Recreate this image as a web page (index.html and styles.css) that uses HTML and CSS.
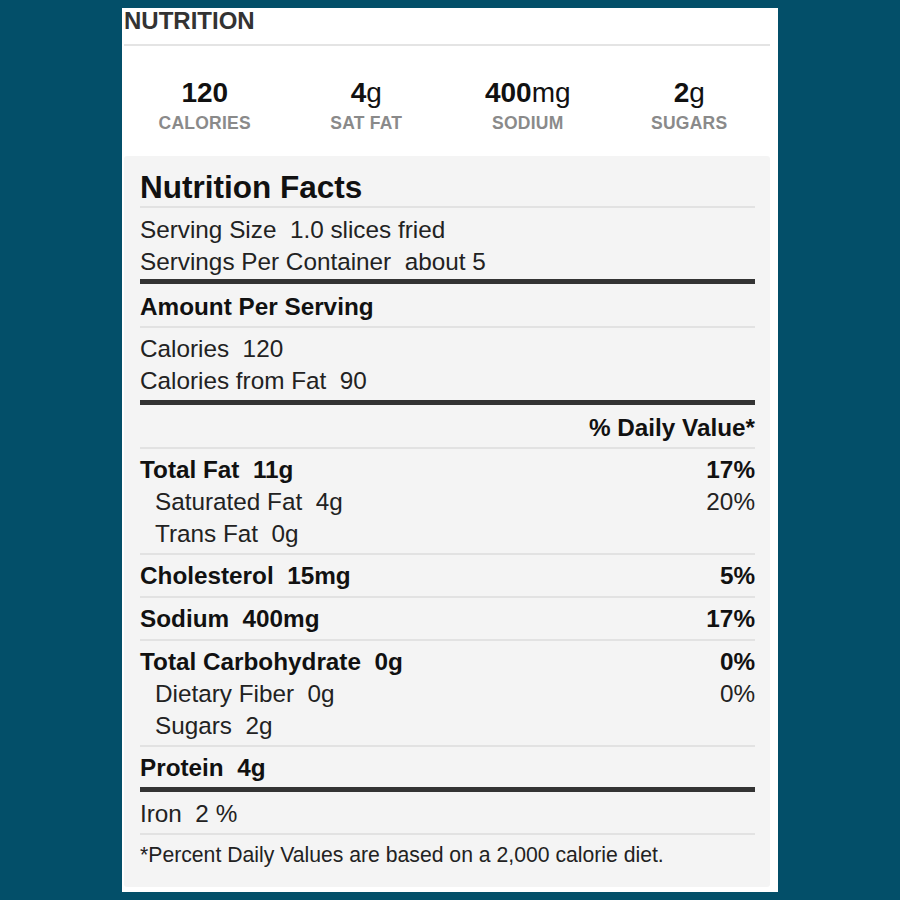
FILE: index.html
```html
<!DOCTYPE html>
<html>
<head>
<meta charset="utf-8">
<link rel="stylesheet" href="styles.css">
</head>
<body>
<div class="card">
  <h2 class="title">NUTRITION</h2>
  <div class="stats">
    <div class="stat"><div class="num"><b>120</b></div><div class="lbl">CALORIES</div></div>
    <div class="stat"><div class="num"><b>4</b>g</div><div class="lbl">SAT FAT</div></div>
    <div class="stat"><div class="num"><b>400</b>mg</div><div class="lbl">SODIUM</div></div>
    <div class="stat"><div class="num"><b>2</b>g</div><div class="lbl">SUGARS</div></div>
  </div>
  <div class="panel">
    <div class="facts-title">Nutrition Facts</div>
    <div class="sec sec-serv">
      <div class="line">Serving Size&nbsp; 1.0 slices fried</div>
      <div class="line">Servings Per Container&nbsp; about 5</div>
    </div>
    <div class="sec thick amount">Amount Per Serving</div>
    <div class="sec sec-cal">
      <div class="line">Calories&nbsp; 120</div>
      <div class="line">Calories from Fat&nbsp; 90</div>
    </div>
    <div class="sec thick dv">% Daily Value*</div>
    <div class="sec">
      <div class="row b"><span>Total Fat&nbsp; 11g</span><span>17%</span></div>
      <div class="row sub"><span>Saturated Fat&nbsp; 4g</span><span>20%</span></div>
      <div class="row sub"><span>Trans Fat&nbsp; 0g</span><span></span></div>
    </div>
    <div class="sec single">
      <div class="row b"><span>Cholesterol&nbsp; 15mg</span><span>5%</span></div>
    </div>
    <div class="sec single">
      <div class="row b"><span>Sodium&nbsp; 400mg</span><span>17%</span></div>
    </div>
    <div class="sec">
      <div class="row b"><span>Total Carbohydrate&nbsp; 0g</span><span>0%</span></div>
      <div class="row sub"><span>Dietary Fiber&nbsp; 0g</span><span>0%</span></div>
      <div class="row sub"><span>Sugars&nbsp; 2g</span><span></span></div>
    </div>
    <div class="sec">
      <div class="row b"><span>Protein&nbsp; 4g</span><span></span></div>
    </div>
    <div class="sec thick iron">
      <div class="line">Iron&nbsp; 2 %</div>
    </div>
    <div class="sec foot">*Percent Daily Values are based on a 2,000 calorie diet.</div>
  </div>
</div>
</body>
</html>
```
FILE: styles.css
```css
html, body {
  margin: 0;
  padding: 0;
  background: #034f69;
}
body {
  padding: 8px 0 9px;
  font-family: "Liberation Sans", Arial, sans-serif;
  color: #222;
}
.card {
  width: 646px;
  margin: 0 auto;
  background: #fff;
  padding: 0 8px 5px 2px;
}
.title {
  margin: 0;
  font-size: 24px;
  font-weight: bold;
  color: #333;
  line-height: 26px;
  padding: 0 0 10px 0;
  border-bottom: 2px solid #e4e4e4;
}
.stats {
  display: grid;
  grid-template-columns: repeat(4, 1fr);
  padding: 30px 0 20px;
}
.stat {
  text-align: center;
}
.num {
  font-size: 28px;
  line-height: 34px;
  color: #111;
}
.lbl {
  font-size: 17.5px;
  font-weight: bold;
  color: #8a8a8a;
  line-height: 26px;
  letter-spacing: 0.25px;
}
.panel {
  background: #f4f4f4;
  border-radius: 3px;
  padding: 14px 15px 16px 16px;
  font-size: 24.3px;
  color: #222;
}
.facts-title {
  font-size: 31.5px;
  font-weight: bold;
  line-height: 34px;
  color: #111;
  padding-bottom: 2px;
}
.sec {
  border-top: 2px solid #e2e2e2;
  padding: 5px 0 3px;
}
.sec.single {
  padding-bottom: 4px;
}
.sec.thick {
  border-top: 5px solid #333;
}
.sec-serv {
  padding: 6px 0 1px;
}
.sec-cal {
  padding: 5px 0 3px;
}
.line {
  line-height: 32px;
}
.amount {
  font-weight: bold;
  line-height: 32px;
  padding: 7px 0 3px;
  color: #111;
}
.dv {
  font-weight: bold;
  text-align: right;
  line-height: 32px;
  padding: 7px 0 3px;
  color: #111;
}
.row {
  display: flex;
  justify-content: space-between;
  line-height: 32px;
}
.row.b {
  font-weight: bold;
  color: #111;
}
.row.sub {
  padding-left: 15px;
}
.iron {
  padding: 6px 0 3px;
}
.foot {
  font-size: 21.2px;
  line-height: 32px;
  padding: 4px 0 0;
}
```
